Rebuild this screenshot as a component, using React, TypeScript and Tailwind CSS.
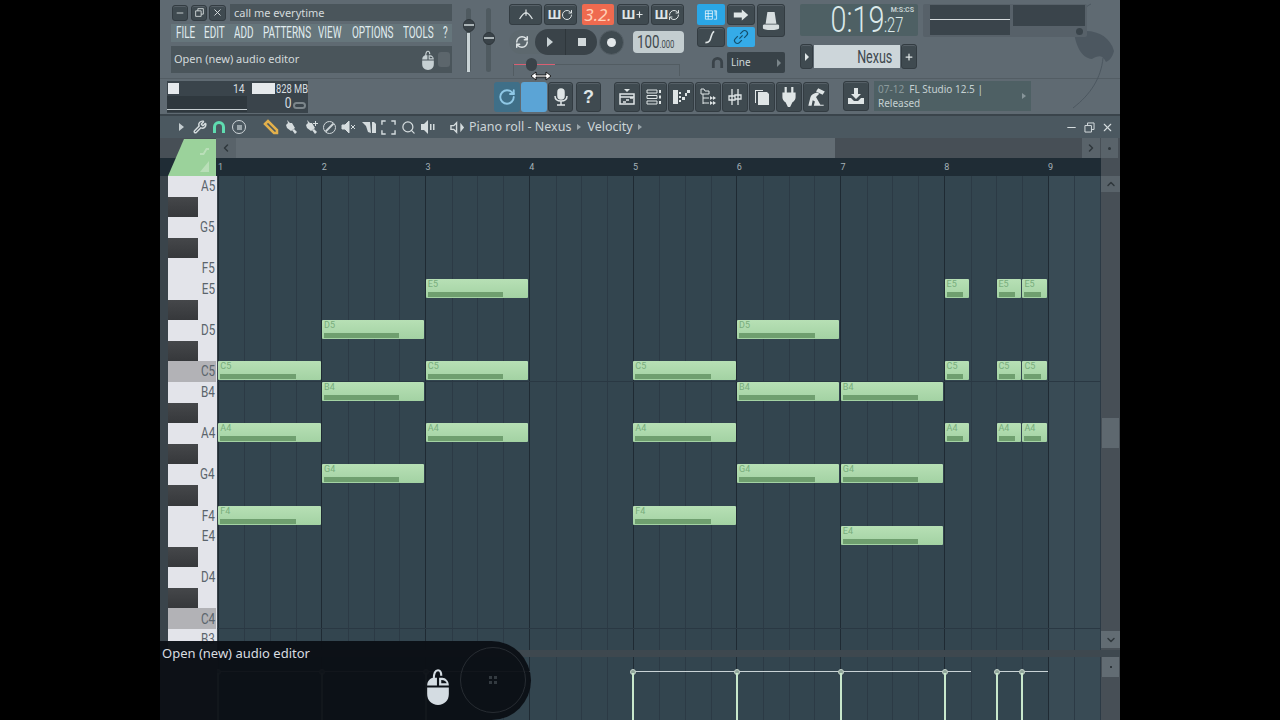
import type { ReactNode } from "react";
import { ChevronDown, ChevronLeft, ChevronRight, ChevronUp, Minus, Plus, RefreshCw, RotateCw, Search, Wrench, X } from "lucide-react";

const SANS = "font-['Roboto','Liberation_Sans',sans-serif]";
const ROWS = ["A5", "", "G5", "", "F5", "E5", "", "D5", "", "C5", "B4", "", "A4", "", "G4", "", "F4", "E4", "", "D4", "", "C4", "B3"];
const ROW_H = 20.6;
const BEAT = 25.94;
const BARS = [1, 2, 3, 4, 5, 6, 7, 8, 9];
const MENU = [
	{ label: "FILE", w: "w-[28px]" },
	{ label: "EDIT", w: "w-[30px]" },
	{ label: "ADD", w: "w-[29px]" },
	{ label: "PATTERNS", w: "w-[55px]" },
	{ label: "VIEW", w: "w-[34px]" },
	{ label: "OPTIONS", w: "w-[51px]" },
	{ label: "TOOLS", w: "w-[40px]" },
	{ label: "?", w: "w-[8px]" },
];

// start in beats, length in beats
const NOTES = [
	{ name: "C5", start: 0, len: 4 },
	{ name: "A4", start: 0, len: 4 },
	{ name: "F4", start: 0, len: 4 },
	{ name: "D5", start: 4, len: 4 },
	{ name: "B4", start: 4, len: 4 },
	{ name: "G4", start: 4, len: 4 },
	{ name: "E5", start: 8, len: 4 },
	{ name: "C5", start: 8, len: 4 },
	{ name: "A4", start: 8, len: 4 },
	{ name: "C5", start: 16, len: 4 },
	{ name: "A4", start: 16, len: 4 },
	{ name: "F4", start: 16, len: 4 },
	{ name: "D5", start: 20, len: 4 },
	{ name: "B4", start: 20, len: 4 },
	{ name: "G4", start: 20, len: 4 },
	{ name: "B4", start: 24, len: 4 },
	{ name: "G4", start: 24, len: 4 },
	{ name: "E4", start: 24, len: 4 },
	{ name: "E5", start: 28, len: 1 },
	{ name: "C5", start: 28, len: 1 },
	{ name: "A4", start: 28, len: 1 },
	{ name: "E5", start: 30, len: 1 },
	{ name: "C5", start: 30, len: 1 },
	{ name: "A4", start: 30, len: 1 },
	{ name: "E5", start: 31, len: 1 },
	{ name: "C5", start: 31, len: 1 },
	{ name: "A4", start: 31, len: 1 },
];

function Btn({ className, children }: { className: string; children?: ReactNode }) {
	return (
		<div className={`flex items-center justify-center rounded-[3px] bg-[#3f4a50] border border-[#333c42] shadow-[inset_0_1px_0_#566067] text-[#dfe5e6] ${className}`}>
			{children}
		</div>
	);
}

function Icon({ children, className = "size-[20px]" }: { children: ReactNode; className?: string }) {
	return (
		<svg viewBox="0 0 20 20" className={className} fill="none" stroke="currentColor" strokeWidth="1.5">
			{children}
		</svg>
	);
}

// no narrow font installed, so squeeze the text horizontally
function Narrow({ children, right, amount = "scale-x-[0.72]" }: { children: ReactNode; right?: boolean; amount?: string }) {
	return <span className={`inline-block whitespace-nowrap ${amount} ${right ? "origin-right" : "origin-left"}`}>{children}</span>;
}

function Fader({ knob, fill }: { knob: number; fill?: boolean }) {
	return (
		<div className="relative w-[5px] h-[64px] rounded-full bg-[#4f5a60]">
			{fill && <div className="absolute left-[1px] right-[1px] top-[25px] bottom-0 bg-[#c9d3d6]" />}
			<div className="absolute -left-[3px] w-[12px] h-[13px] rounded-full bg-[#3a4349] border border-[#2f373c]" style={{ top: knob }}>
				<div className="mt-[4px] h-[2px] bg-[#aab3b6]" />
			</div>
		</div>
	);
}

function MouseIcon({ className }: { className: string }) {
	return (
		<svg viewBox="0 0 24 36" className={className} fill="currentColor">
			<path d="M8 12C8 6 9 3 12 3c3 0 3 3 3 5" fill="none" stroke="currentColor" strokeWidth="2" />
			<path d="M11 10H8c-3 0-6 3-6 7h9z" />
			<path d="M13 10h3c3 0 6 3 6 7h-9zM15 12v3h5c-.4-1.5-2-3-5-3z" fillRule="evenodd" />
			<path d="M2 19h20v6c0 6-4 10-10 10S2 31 2 25z" />
		</svg>
	);
}

function TopRow() {
	return (
		<div className="flex h-[78px] pt-[4px]">
			<div className="ml-[11px] w-[281px] flex flex-col">
				<div className="flex h-[17px] items-center">
					<Btn className="w-[16px] h-[16px] ml-[1px]"><Minus className="size-[10px]" /></Btn>
					<Btn className="w-[16px] h-[16px] ml-[3px]">
						<Icon className="size-[11px]"><path d="M3 7h10v10H3zM7 7V3h10v10h-4" /></Icon>
					</Btn>
					<Btn className="w-[17px] h-[16px] ml-[2px]"><X className="size-[11px]" /></Btn>
					<div className="ml-[4px] flex-1 h-[17px] bg-[#4a555b] px-[4px] text-[11px] leading-[17px] text-[#d3dadb] font-['Noto_Sans',sans-serif]">call me everytime</div>
				</div>
				<div className={`mt-[3px] h-[18px] bg-[#66767c] flex items-center pl-[5px] text-[16px] text-[#e0ecef] ${SANS}`}>
					{MENU.map((m) => (
						<div key={m.label} className={`${m.w} shrink-0`}>
							<Narrow amount="scale-x-[0.62]">{m.label}</Narrow>
						</div>
					))}
				</div>
				<div className="mt-[4px] h-[27px] bg-[#4a555b] flex items-center pl-[3px] pr-[2px] text-[11px] text-[#d3dadb] font-['Noto_Sans',sans-serif]">
					<span className="flex-1">Open (new) audio editor</span>
					<MouseIcon className="w-[14px] h-[22px] text-[#c6d0d3]" />
					<div className="ml-[3px] w-[12px] h-[15px] rounded-[3px] bg-[#5c666c]" />
				</div>
			</div>
			<div className="w-[57px] pt-[4px] pl-[14px] flex gap-[15px]">
				<Fader knob={11} fill />
				<Fader knob={24} />
			</div>
			<div className="w-[188px] flex flex-col">
				<div className="flex gap-[2px]">
					<Btn className="w-[33px] h-[21px]">
						<Icon className="w-[28px] h-[16px]"><path d="M2 15c3-5 6-8 8-8s5 3 8 8M10 3v8" /></Icon>
					</Btn>
					<Btn className="w-[33px] h-[21px] text-[13px] font-bold leading-none">Ш<RotateCw className="size-[12px]" /></Btn>
					<div className="ml-[3px] w-[32px] h-[21px] rounded-[2px] bg-[#ef6a4f] text-center text-[#ffd0b8] text-[17px] leading-[21px] italic">3.2.</div>
					<Btn className="ml-[1px] w-[32px] h-[21px] text-[13px] font-bold leading-none">Ш<Plus className="size-[9px]" strokeWidth={3} /></Btn>
					<Btn className="w-[33px] h-[21px] text-[13px] font-bold leading-none">Ш<RefreshCw className="size-[12px]" /></Btn>
				</div>
				<div className="mt-[4px] flex items-center h-[26px]">
					<div className="w-[34px] h-[24px] rounded-l-full bg-[#5d686e] flex items-center pl-[6px] text-[#dfe5e6]">
						<RefreshCw className="size-[14px]" strokeWidth={2.5} />
					</div>
					<div className="-ml-[8px] w-[62px] h-[26px] rounded-full bg-[#3a4349] flex items-center">
						<div className="w-[31px] flex justify-center border-r border-[#2e363b] h-full items-center">
							<div className="w-0 h-0 border-y-[5px] border-y-transparent border-l-[6px] border-l-[#c9d2d5]" />
						</div>
						<div className="flex-1 flex justify-center">
							<div className="size-[8px] bg-[#d2d9db]" />
						</div>
					</div>
					<div className="ml-[2px] size-[25px] rounded-full bg-[#3f4a50] border border-[#566067] flex items-center justify-center">
						<div className="size-[9px] rounded-full bg-[#e3e8ea]" />
					</div>
					<div className={`ml-[9px] w-[51px] h-[22px] rounded-[4px] bg-[#c3cdd0] pl-[4px] text-[#3f494e] text-[19px] leading-[22px] ${SANS}`}>
						<Narrow amount="scale-x-[0.7]">100<span className="text-[11px]">.000</span></Narrow>
					</div>
				</div>
				<div className="relative mt-[9px] h-[12px] ml-[4px] w-[167px] border-t border-x border-[#525c62]">
					<div className="absolute -top-[1px] left-0 w-[41px] h-[1px] bg-[#d95f72]" />
					<div className="absolute -top-[7px] left-[12px] w-[11px] h-[13px] rounded-full bg-[#3a4349]" />
				</div>
			</div>
			<div className="w-[103px]">
				<div className="flex gap-[2px]">
					<div className="w-[28px] h-[21px] rounded-[2px] bg-[#2aa6e6] flex items-center justify-center text-white">
						<Icon className="w-[24px] h-[14px]"><path d="M2 4h10v12H2zM2 8h10M2 12h10M6 4v12M14 4h4v12h-4M16 4v7" strokeWidth="1" /></Icon>
					</div>
					<Btn className="w-[28px] h-[21px]">
						<svg viewBox="0 0 20 20" className="size-[16px]" fill="currentColor"><path d="M1 7h10V3l8 7-8 7v-4H1z" /></svg>
					</Btn>
					<Btn className="w-[28px] h-[33px]">
						<svg viewBox="0 0 20 24" className="w-[18px] h-[24px]" fill="#d7dee0"><path d="M6 2h8l2 13H4zM1 17c0-1 2-1 3-1h12c1 0 3 0 3 1v3c0 1-4 2-9 2s-9-1-9-2z" /></svg>
					</Btn>
				</div>
				<div className="-mt-[10px] flex gap-[2px]">
					<Btn className="w-[28px] h-[20px]">
						<Icon className="size-[16px]"><path d="M3 17c5 0 6-3 7-7s2-6 4-7" strokeWidth="2" /></Icon>
					</Btn>
					<div className="w-[28px] h-[20px] rounded-[2px] bg-[#35abe8] flex items-center justify-center text-[#14506e]">
						<Icon className="size-[16px]"><path d="M8 12l4-4M6 9l-3 3a3 3 0 0 0 5 5l3-3M14 11l3-3a3 3 0 0 0-5-5L9 6" /></Icon>
					</div>
				</div>
				<div className="mt-[5px] flex items-center">
					<svg viewBox="0 0 14 14" className="ml-[14px] size-[13px] text-[#3a4349]" fill="none" stroke="currentColor" strokeWidth="3"><path d="M2.5 13V7a4.5 4.5 0 0 1 9 0v6" /></svg>
					<div className="ml-[3px] w-[58px] h-[21px] rounded-[2px] bg-[#384248] flex items-center justify-between px-[4px] text-[10px] text-[#cfd7d9] font-['Noto_Sans',sans-serif]">
						Line<div className="w-0 h-0 border-y-[4px] border-y-transparent border-l-[4px] border-l-[#7a858a]" />
					</div>
				</div>
			</div>
			<div className="w-[123px] flex flex-col">
				<div className="w-[118px] h-[32px] bg-[#4e6064] rounded-[2px] flex justify-end pr-[4px] text-[#dbe9ea] font-['Roboto',sans-serif] font-light">
					<span className="text-[36px] leading-[33px]"><Narrow right amount="scale-x-[0.8]">0:19</Narrow></span>
					<div className="flex flex-col items-end w-[30px] shrink-0">
						<span className="text-[7px] leading-[9px] pt-[2px] font-bold text-[#c5d1d2]">M:S:CS</span>
						<span className="text-[21px] leading-[20px] w-full"><Narrow amount="scale-x-[0.7]">:27</Narrow></span>
					</div>
				</div>
				<div className="mt-[8px] flex items-center">
					<Btn className="w-[13px] h-[25px]">
						<div className="w-0 h-0 border-y-[4px] border-y-transparent border-l-[4px] border-l-[#dfe5e6]" />
					</Btn>
					<div className={`ml-[1px] w-[86px] h-[23px] bg-[#cdd6da] text-right pr-[8px] text-[#3d484e] text-[19px] leading-[23px] ${SANS}`}>
						<Narrow right amount="scale-x-[0.66]">Nexus</Narrow>
					</div>
					<Btn className="ml-[1px] w-[16px] h-[25px]"><Plus className="size-[10px]" strokeWidth={3} /></Btn>
				</div>
			</div>
			<div className="relative flex-1">
				<svg viewBox="0 0 50 110" className="absolute -top-[4px] left-[146px] w-[50px] h-[110px] text-[#4c5760]" fill="currentColor">
					<path d="M5 33c18-6 36 2 40 18-2 8-6 10-8 11-4-8-8-6-14-3C12 58 7 45 5 33z" />
					<path d="M34 58c-2 20-12 36-30 50" fill="none" stroke="currentColor" strokeWidth="1" />
					<path d="M8 20c4-9 8-13 14-16" fill="none" stroke="currentColor" strokeWidth="1" />
				</svg>
				<div className="relative flex gap-[3px] w-[164px] h-[33px] bg-[#576169] rounded-[2px] pl-[7px]">
					<div className="relative w-[80px] h-[30px] mt-[1px] bg-[#3a444b]">
						<div className="absolute top-[14px] inset-x-0 h-[1px] bg-[#d6dcde]" />
					</div>
					<div className="w-[72px] h-[21px] mt-[1px] bg-[#3a444b]" />
					<div className="absolute right-[4px] bottom-[2px] size-[7px] rounded-full bg-[#3a444b]" />
				</div>
			</div>
		</div>
	);
}

function SecondRow() {
	const tools = [
		<Icon><path d="M7 2h6l-3 3z" fill="currentColor" stroke="none" /><path d="M3 7h14v10H3z" /><path d="M3 10h14M6 15h3M9 13h3M13 11h3" /></Icon>,
		<Icon><path d="M3 3h10v3H3zM3 8.5h10v3H3zM3 14h10v3H3z" strokeWidth="1" /><path d="M15 3h2v3h-2zM15 8.5h2v3h-2zM15 14h2v3h-2z" fill="currentColor" stroke="none" /></Icon>,
		<svg viewBox="0 0 20 20" className="size-[20px]" fill="currentColor"><path d="M2 3h5v14H2z" /><path d="M8 5h2v2H8zM8 9h2v2H8zM8 13h2v2H8zM11 13h3v-3h-3zM14 9h2V6h-2zM16 6h3V3h-3z" /></svg>,
		<Icon><path d="M3 2h3l1 2h4v3H3zM5 7v10M5 11h6M5 16h6" strokeWidth="1" /><path d="M12 9l3 2-3 2zM15 9l3 2-3 2zM12 14l3 2-3 2zM15 14l3 2-3 2z" fill="currentColor" stroke="none" /></Icon>,
		<Icon><path d="M7 2v16M13 2v16M4 9h6v4H4zM10 8h6v4h-6z" strokeWidth="1.3" /></Icon>,
		<svg viewBox="0 0 20 20" className="size-[20px]" fill="currentColor"><path d="M6 5h9l2 2v11H6z" /><path d="M3 3h8v1H4v12H3z" /></svg>,
		<svg viewBox="0 0 20 20" className="size-[22px]" fill="currentColor"><path d="M6 1h2v5H6zM12 1h2v5h-2zM4 6h12v4c0 3-2 4-3 5l-2 4H9l-2-4c-1-1-3-2-3-5z" /></svg>,
		<svg viewBox="0 0 20 20" className="size-[22px]" fill="currentColor"><path d="M12 2l6 3-2 3-6-3zM11 6l2 1-3 3 4 7h3v1H8l1-4-2-1-1 5H3l2-8c.5-2 3-3 6-4z" /></svg>,
	];
	return (
		<div className="flex h-[36px] pt-[2px] border-t border-[#535d64]">
			<div className="ml-[7px] w-[141px] h-[32px] bg-[#3a444b] relative">
				<div className={`flex items-center h-[13px] pt-[2px] text-[#d7dee0] text-[13px] leading-none ${SANS}`}>
					<div className="ml-[1px] w-[11px] h-[11px] bg-[#e5e9ec]" />
					<span className="ml-auto mr-[7px]"><Narrow right amount="scale-x-[0.8]">14</Narrow></span>
					<div className="w-[23px] h-[11px] bg-[#e5e9ec]" />
					<span className="w-[32px] ml-[1px] shrink-0"><Narrow amount="scale-x-[0.72]">828 MB</Narrow></span>
				</div>
				<div className="flex h-[18px] items-end">
					<div className="relative w-[80px] h-[16px] bg-[#2f383e]">
						<div className="absolute bottom-[2px] inset-x-0 h-[1px] bg-[#c7cfd2]" />
					</div>
					<span className={`ml-auto mb-[1px] text-[15px] leading-none text-[#d7dee0] ${SANS}`}><Narrow right amount="scale-x-[0.8]">0</Narrow></span>
					<div className="ml-[2px] mr-[2px] mb-[3px] w-[13px] h-[7px] rounded-full border-2 border-[#7b858a]" />
				</div>
			</div>
			<div className="ml-[46px] w-[140px]" />
			<div className="flex items-center h-[32px] gap-[1px]">
				<div className="w-[26px] h-[30px] rounded-[3px] bg-[#3f6f88] flex items-center justify-center text-[#8fc8e6]">
					<RotateCw className="size-[18px]" strokeWidth={2.5} />
				</div>
				<div className="w-[26px] h-[30px] rounded-[3px] bg-[#5ba4d6]" />
				<Btn className="w-[25px] h-[30px]">
					<Icon className="size-[20px]"><rect x="7" y="2" width="6" height="10" rx="3" fill="currentColor" /><path d="M4 9c0 4 3 5 6 5s6-1 6-5M10 14v4M6 18h8" /></Icon>
				</Btn>
				<Btn className="ml-[2px] w-[25px] h-[30px] text-[18px] font-bold font-['Liberation_Sans',sans-serif]">?</Btn>
			</div>
			<div className="ml-[13px] flex items-center h-[32px] gap-[1px]">
				{tools.map((icon, i) => (
					<Btn key={i} className="w-[26px] h-[30px]">{icon}</Btn>
				))}
			</div>
			<Btn className="ml-[14px] w-[26px] h-[30px]">
				<svg viewBox="0 0 20 20" className="size-[20px]" fill="currentColor"><path d="M8 2h4v6h3l-5 5-5-5h3z" /><path d="M2 12h3l3 3h4l3-3h3v6H2z" /></svg>
			</Btn>
			<div className="ml-[5px] w-[157px] h-[30px] bg-[#4e6064] flex flex-col justify-center px-[4px] text-[10px] leading-[14px] text-[#c5d1d2] font-['Noto_Sans',sans-serif] relative">
				<div className="whitespace-nowrap"><span className="text-[#8c9a9c]">07-12</span>&nbsp; FL Studio 12.5 |</div>
				<div>Released</div>
				<div className="absolute right-[5px] top-[12px] w-0 h-0 border-y-[3px] border-y-transparent border-l-[4px] border-l-[#87959a]" />
			</div>
		</div>
	);
}

function BrushIcon({ plus }: { plus?: boolean }) {
	return (
		<svg viewBox="0 0 16 16" className="ml-[4px] size-[16px] text-[#d5dcde]" fill="currentColor">
			<path d="M4 1l3 3 2 0 3 5-4 3-4-3-1-3 2-2z" />
			<path d="M9 11l2-1 3 3-2 2z" />
			{plus && <path d="M12 2h1v2h2v1h-2v2h-1V5h-2V4h2z" />}
		</svg>
	);
}

function TitleBar() {
	const paint = "text-[#d5dcde]";
	return (
		<div className="flex items-center h-[22px] bg-[#4b5860] text-[#d5dcde]">
			<div className="ml-[19px] w-0 h-0 border-y-[4px] border-y-transparent border-l-[5px] border-l-[#c5ced1]" />
			<Wrench className="ml-[9px] size-[14px]" strokeWidth={2.5} />
			<svg viewBox="0 0 14 14" className="ml-[5px] size-[14px] text-[#5fdcb0]" fill="none" stroke="currentColor" strokeWidth="3"><path d="M2.5 13V7a4.5 4.5 0 0 1 9 0v6" /></svg>
			<div className="ml-[6px] size-[14px] rounded-full border-[1.5px] border-[#cfd6d9] flex items-center justify-center"><div className="size-[5px] bg-[#9aa5aa]" /></div>
			<svg viewBox="0 0 16 16" className="ml-[17px] size-[16px] text-[#e3b04b]" fill="none" stroke="currentColor" strokeWidth="2.5"><path d="M2 5l3-3 9 9v3h-3z" /></svg>
			<BrushIcon />
			<BrushIcon plus />
			<div className="ml-[4px] size-[13px] rounded-full border-[1.5px] border-[#cfd6d9] relative overflow-hidden"><div className="absolute left-[-2px] top-[4px] w-[16px] h-[1.5px] bg-[#cfd6d9] -rotate-45" /></div>
			<svg viewBox="0 0 16 16" className={`ml-[5px] size-[16px] ${paint}`} fill="currentColor"><path d="M1 6h3l4-4v12l-4-4H1zM10 6l4 4M14 6l-4 4" stroke="currentColor" strokeWidth="1" /></svg>
			<svg viewBox="0 0 16 16" className={`ml-[4px] size-[16px] ${paint}`} fill="currentColor"><path d="M1 3h8l1 11-3-1-2-6zM11 3h2l2 2v9h-4z" /></svg>
			<svg viewBox="0 0 16 16" className={`ml-[4px] size-[15px] ${paint}`} fill="none" stroke="currentColor" strokeWidth="1.5"><path d="M1 5V1h4M11 1h4v4M15 11v4h-4M5 15H1v-4" /></svg>
			<Search className="ml-[5px] size-[15px]" strokeWidth={2} />
			<svg viewBox="0 0 16 16" className={`ml-[4px] size-[16px] ${paint}`} fill="currentColor"><path d="M1 5h3l4-4v14l-4-4H1zM10 5h1.5v6H10zM13 5h1.5v6H13z" /></svg>
			<svg viewBox="0 0 16 16" className={`ml-[14px] size-[15px] ${paint}`} fill="none" stroke="currentColor" strokeWidth="1.5"><path d="M1 6h3l3-3v10l-3-3H1z" /><path d="M11 3l4 5-4 5z" fill="currentColor" stroke="none" /></svg>
			<div className="ml-[4px] text-[12.5px] text-[#cdd5d8] font-['Noto_Sans',sans-serif] whitespace-nowrap flex items-center">
				Piano roll - Nexus
				<div className="mx-[6px] w-0 h-0 border-y-[3px] border-y-transparent border-l-[4px] border-l-[#9aa5aa]" />
				Velocity
				<div className="ml-[5px] w-0 h-0 border-y-[3px] border-y-transparent border-l-[4px] border-l-[#9aa5aa]" />
			</div>
			<div className="ml-auto flex items-center gap-[5px] pr-[6px]">
				<Minus className="size-[13px]" />
				<Icon className="size-[13px]"><path d="M3 7h10v10H3zM7 7V3h10v10h-4" /></Icon>
				<X className="size-[13px]" />
			</div>
		</div>
	);
}

function ScrollRow() {
	return (
		<div className="flex h-[20px] bg-[#474f56]">
			<div className="w-[56px] shrink-0" />
			<div className="w-[20px] bg-[#59636a] flex items-center justify-center"><ChevronLeft className="size-[12px] text-[#2f373c]" strokeWidth={3} /></div>
			<div className="w-[599px] bg-[#626c73]" />
			<div className="flex-1" />
			<div className="w-[18px] bg-[#59636a] flex items-center justify-center"><ChevronRight className="size-[12px] text-[#2f373c]" strokeWidth={3} /></div>
			<div className="ml-[1px] mr-[2px] w-[17px] bg-[#59636a] flex items-center justify-center"><div className="size-[3px] rounded-full bg-[#2f373c]" /></div>
		</div>
	);
}

function Ruler() {
	return (
		<div className="flex h-[18px] bg-[#1f2c35]">
			<div className="w-[58px] shrink-0" />
			<div className="flex overflow-hidden flex-1">
				{BARS.map((n) => (
					<div key={n} className={`w-[103.76px] shrink-0 pt-[2px] text-[9px] leading-[14px] text-[#a5b2b8] ${SANS}`}>{n}</div>
				))}
			</div>
			<div className="w-[19px] bg-[#474f56]" />
		</div>
	);
}

function GridBars() {
	return (
		<>
			{BARS.map((n) => (
				<div key={n} className={`w-[103.76px] shrink-0 flex h-full border-l border-[#1f2a33] first:ml-[0.6px] ${n === 9 ? "bg-[#394b55]" : "bg-[#33454f]"}`}>
					{[0, 1, 2, 3].map((b) => (
						<div key={b} className={`w-1/4 h-full ${b > 0 ? "border-l border-[#2c3a45]" : ""}`} />
					))}
				</div>
			))}
		</>
	);
}

function Note({ name, start, len }: { name: string; start: number; len: number }) {
	const row = ROWS.indexOf(name);
	return (
		<div
			className="absolute h-[19px] rounded-[1px] bg-gradient-to-b from-[#b7e0b5] to-[#a3d2a3] pl-[2px] pr-[1px]"
			style={{ left: start * BEAT + 1.3, top: row * ROW_H, width: len * BEAT - 1.5 }}
		>
			<div className={`text-[9px] leading-[10px] text-[#78ad7c] ${SANS}`}>{name}</div>
			<div className="mt-[3px] h-[5px] w-[76%] bg-[#6f9f6f]" />
		</div>
	);
}

function Keys() {
	return (
		<div className="w-[48px] ml-[8px] shrink-0 flex flex-col overflow-hidden h-[474px]">
			{ROWS.map((r, i) => (
				<div key={i} className={`h-[20.6px] shrink-0 flex justify-end items-center pr-[1px] text-[15px] text-[#5b646c] ${SANS} ${r === "C5" || r === "C4" ? "bg-[#b2b2b6]" : "bg-[#e3e4ea]"}`}>
					{r === "" ? <div className="mr-auto w-[30px] h-full bg-gradient-to-b from-[#45474a] to-[#36383b]" /> : <Narrow right amount="scale-x-[0.78]">{r}</Narrow>}
				</div>
			))}
		</div>
	);
}

export default function App() {
	return (
		<div className="flex justify-center h-[720px] bg-black overflow-hidden">
			<div className="relative w-[960px] h-[720px] flex flex-col bg-[#5f6a72] overflow-hidden">
				<TopRow />
				<SecondRow />
				<div className="h-[2px] bg-[#3a444b]" />
				<div className="flex-1 flex flex-col bg-[#3a444b] overflow-hidden">
					<TitleBar />
					<div className="relative">
						<ScrollRow />
						<Ruler />
						<div className="absolute left-[8px] top-[1px] w-[48px] h-[37px] bg-[#9bd29b] [clip-path:polygon(16px_0,100%_0,100%_100%,0_100%,0_37px)]">
							<svg viewBox="0 0 48 37" className="size-full text-[#b9dfb8]" fill="currentColor">
								<path d="M32 14h3l3-5h3v2h-2l-3 5h-4z" />
								<path d="M32 33h9V22z" />
							</svg>
						</div>
					</div>
					<div className="flex h-[474px]">
						<Keys />
						<div className="w-[1px] bg-[#e3e4ea]" />
						<div className="relative flex-1 flex overflow-hidden">
							<GridBars />
							<div className="absolute inset-x-0 top-[205px] h-[1px] bg-[#2a3843]" />
							<div className="absolute inset-x-0 top-[452px] h-[1px] bg-[#2a3843]" />
							{NOTES.map((n, i) => (
								<Note key={i} {...n} />
							))}
						</div>
						<div className="w-[19px] shrink-0 bg-[#474f56] flex flex-col">
							<div className="h-[16px] bg-[#59636a] flex items-center justify-center"><ChevronUp className="size-[12px] text-[#2f373c]" strokeWidth={3} /></div>
							<div className="mt-[226px] mx-[1px] h-[30px] bg-[#5e686f]" />
							<div className="mt-auto mb-[2px] h-[17px] bg-[#626c73] flex items-center justify-center"><ChevronDown className="size-[12px] text-[#2f373c]" strokeWidth={3} /></div>
						</div>
					</div>
					<div className="h-[7px] bg-[#3e484f]" />
					<div className="flex flex-1">
						<div className="relative flex-1 ml-[57px] flex overflow-hidden">
							<GridBars />
							{NOTES.filter((n, i) => NOTES.findIndex((m) => m.start === n.start) === i).map((n) => (
								<div key={n.start} className="absolute top-[14px] bottom-0" style={{ left: n.start * BEAT + 1.3 }}>
									<div className="absolute left-0 top-0 h-[1px] bg-[#c9d3d6]" style={{ width: n.len * BEAT }} />
									<div className="absolute -left-[3px] -top-[2px] size-[6px] rounded-full bg-[#8ea599] border border-[#c5d2ca]" />
									<div className="absolute -left-[1px] top-[2px] bottom-0 w-[2px] bg-[#c8e8cc]" />
								</div>
							))}
						</div>
						<div className="w-[19px] shrink-0 bg-[#474f56]">
							<div className="h-[20px] mx-[1px] bg-[#626c73] flex items-center justify-center"><div className="size-[2px] bg-[#2f373c]" /></div>
						</div>
					</div>
				</div>

				{/* hint overlay from the screen recorder */}
				<div className="absolute left-0 bottom-0 w-[371px] h-[79px] rounded-r-[40px] bg-[#0b1016]/97">
					<div className="ml-[2px] mt-[3px] text-[13px] text-[#d9dde0] font-['Noto_Sans',sans-serif]">Open (new) audio editor</div>
					<MouseIcon className="absolute left-[265px] top-[24px] w-[26px] h-[43px] text-[#d4dce2]" />
					<div className="absolute left-[300px] top-[6px] size-[66px] rounded-full border border-[#272c32] flex items-center justify-center">
						<div className="grid grid-cols-2 gap-[2px]">
							<div className="size-[3px] bg-[#333a40]" />
							<div className="size-[3px] bg-[#333a40]" />
							<div className="size-[3px] bg-[#333a40]" />
							<div className="size-[3px] bg-[#333a40]" />
						</div>
					</div>
				</div>

				{/* mouse cursor */}
				<svg viewBox="0 0 22 10" className="absolute left-[370px] top-[71px] w-[22px] h-[10px]">
					<path d="M1 5l5-4v3h10V1l5 4-5 4V6H6v3z" fill="#fff" stroke="#000" strokeWidth="0.8" />
				</svg>
			</div>
		</div>
	);
}
